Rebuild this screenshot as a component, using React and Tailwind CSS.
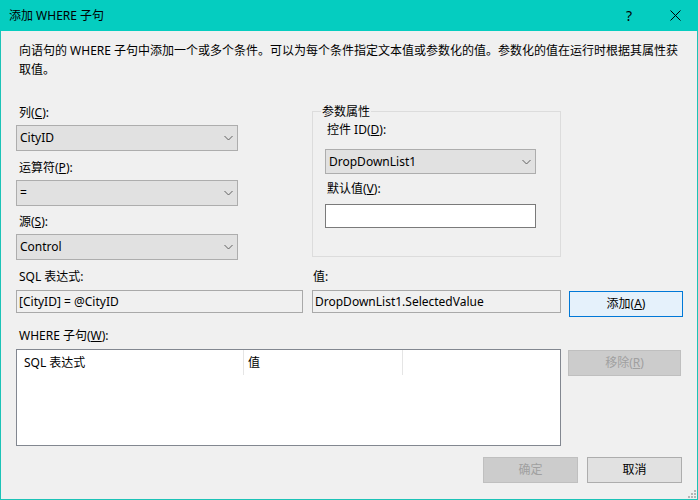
import React from "react";

const Chevron = () => (
  <svg width="9" height="6" viewBox="0 0 9 6" className="mr-[4px]">
    <path d="M0.5 1 L4.5 5 L8.5 1" fill="none" stroke="#606060" strokeWidth="1" />
  </svg>
);

const Select = ({ value, className = "" }) => (
  <div
    className={`flex items-center justify-between border border-[#adadad] bg-[#e1e1e1] pl-[3px] ${className}`}
  >
    <span>{value}</span>
    <Chevron />
  </div>
);

const Label = ({ children, className = "" }) => (
  <div className={`h-[18px] leading-[18px] ${className}`}>{children}</div>
);

const Grip = () => (
  <svg width="8" height="8" viewBox="0 0 8 8">
    {[
      [6, 0],
      [3, 3],
      [6, 3],
      [0, 6],
      [3, 6],
      [6, 6],
    ].map(([x, y], i) => (
      <rect key={i} x={x} y={y} width="2" height="2" fill="#b5b5b5" />
    ))}
  </svg>
);

export default function App() {
  return (
    <div className="flex h-[500px] w-[698px] flex-col font-['Noto_Sans','Noto_Sans_CJK_SC',sans-serif] text-[12px] text-black">
      {/* Title bar */}
      <div className="flex h-[31px] shrink-0 items-center bg-[#05cdc0]">
        <div className="flex-1 pl-[9px] leading-[18px]">添加 WHERE 子句</div>
        <div className="flex h-full w-[46px] items-center justify-center text-[14px]">?</div>
        <div className="flex h-full w-[46px] items-center justify-center">
          <svg width="11" height="11" viewBox="0 0 11 11">
            <path d="M0.5 0.5 L10.5 10.5 M10.5 0.5 L0.5 10.5" stroke="#000" strokeWidth="1" />
          </svg>
        </div>
      </div>

      {/* Body */}
      <div className="flex flex-1 flex-col border-x border-b border-[#1cc3b7] bg-[#f0f0f0]">
        <div className="pl-[18px] pt-[10px] leading-[19px]">
          <div className="whitespace-nowrap">
            向语句的 WHERE 子句中添加一个或多个条件。可以为每个条件指定文本值或参数化的值。参数化的值在运行时根据其属性获
          </div>
          <div>取值。</div>
        </div>

        {/* Top row */}
        <div className="mt-[25px] flex items-start pl-[15px]">
          <div className="flex w-[222px] flex-col">
            <Label className="pl-[3px]">
              列(<u>C</u>):
            </Label>
            <Select value="CityID" className="mt-[3px] h-[26px]" />
            <Label className="mt-[8px] pl-[3px]">
              运算符(<u>P</u>):
            </Label>
            <Select value="=" className="mt-[3px] h-[26px]" />
            <Label className="mt-[7px] pl-[3px]">
              源(<u>S</u>):
            </Label>
            <Select value="Control" className="mt-[3px] h-[26px]" />
          </div>

          <div className="ml-[74px] mt-[7px] flex h-[146px] w-[249px] flex-col border border-[#dcdcdc]">
            <div className="-mt-[9px] ml-[8px] h-[18px] w-fit bg-[#f0f0f0] px-[1px] leading-[18px]">
              参数属性
            </div>
            <Label className="pl-[14px]">
              控件 ID(<u>D</u>):
            </Label>
            <Select value="DropDownList1" className="ml-[12px] mt-[10px] h-[25px] w-[211px]" />
            <Label className="mt-[6px] pl-[14px]">
              默认值(<u>V</u>):
            </Label>
            <div className="ml-[12px] mt-[6px] h-[24px] w-[211px] border border-[#7a7a7a] bg-white" />
          </div>
        </div>

        {/* Expression row */}
        <div className="mt-[8px] flex pl-[15px]">
          <Label className="w-[296px] pl-[3px]">SQL 表达式:</Label>
          <Label className="pl-[1px]">值:</Label>
        </div>
        <div className="mt-[4px] flex items-start pl-[15px]">
          <div className="flex h-[23px] w-[287px] items-center border border-[#a9a9a9] bg-[#f0f0f0] pl-[2px]">
            [CityID] = @CityID
          </div>
          <div className="ml-[9px] flex h-[23px] w-[249px] items-center border border-[#a9a9a9] bg-[#f0f0f0] pl-[2px]">
            DropDownList1.SelectedValue
          </div>
          <div className="ml-[8px] mt-[1px] flex h-[26px] w-[114px] items-center justify-center border border-[#0078d7] bg-[#e5f1fb]">
            添加(<u>A</u>)
          </div>
        </div>

        {/* Where clause list */}
        <Label className="mt-[10px] pl-[18px]">
          WHERE 子句(<u>W</u>):
        </Label>
        <div className="mt-[4px] flex items-start pl-[15px]">
          <div className="h-[97px] w-[545px] border border-[#828790] bg-white">
            <div className="flex h-[25px] items-center">
              <div className="flex h-full w-[227px] items-center border-r border-[#e5e5e5] pl-[7px]">
                SQL 表达式
              </div>
              <div className="flex h-full w-[159px] items-center border-r border-[#e5e5e5] pl-[4px]">
                值
              </div>
            </div>
          </div>
          <div className="ml-[7px] mt-[1px] flex h-[26px] w-[113px] items-center justify-center border border-[#bfbfbf] bg-[#cccccc] text-[#a0a0a0]">
            移除(<u>R</u>)
          </div>
        </div>

        {/* Dialog buttons */}
        <div className="mt-[11px] flex justify-end pr-[15px]">
          <div className="flex h-[26px] w-[95px] items-center justify-center border border-[#bfbfbf] bg-[#cccccc] text-[#a0a0a0]">
            确定
          </div>
          <div className="ml-[9px] flex h-[26px] w-[95px] items-center justify-center border border-[#adadad] bg-[#e1e1e1]">
            取消
          </div>
        </div>
        <div className="flex flex-1 items-end justify-end pb-[1px] pr-[1px]">
          <Grip />
        </div>
      </div>
    </div>
  );
}
